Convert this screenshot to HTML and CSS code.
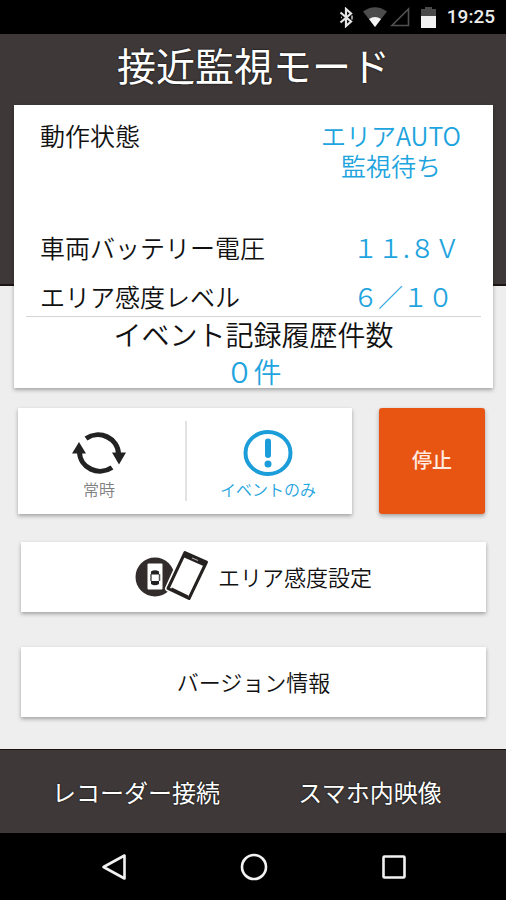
FILE: index.html
```html
<!DOCTYPE html>
<html lang="ja">
<head>
<meta charset="utf-8">
<meta name="viewport" content="width=device-width, initial-scale=1">
<title>接近監視モード</title>
<link rel="stylesheet" href="styles.css">
</head>
<body>
<div class="statusbar">
  <svg width="15" height="21" viewBox="0 0 15 21" aria-hidden="true"><path d="M1.500 5.500L12 14.500L7 19V2L12 6.500L1.500 15.500" fill="none" stroke="#e4e4e4" stroke-width="2.200"/><path d="M13 8.500v4M2 10.500h1" stroke="#bbb" stroke-width="1.600"/></svg>
  <svg class="wifi" width="24" height="20" viewBox="0 0 24 20" aria-hidden="true"><path d="M0 4.500Q12-4 24 4.500L12 20Z" fill="#4c4c4c"/><path d="M6 12Q12 8 18 12L12 20Z" fill="#f4f4f4"/></svg>
  <svg class="signal" width="20" height="20" viewBox="0 0 20 20" aria-hidden="true"><path d="M2 18.500H18.500V2Z" fill="none" stroke="#505050" stroke-width="1.600"/></svg>
  <svg class="battery" width="15" height="21" viewBox="0 0 15 21" aria-hidden="true"><path d="M4 0h7v2h4v7H0V2h4Z" fill="#4a4a4a"/><path d="M0 9h15v12H0Z" fill="#f2f2f2"/></svg>
  <time class="clock">19:25</time>
</div>

<main class="content">
  <section class="hero">
    <h1 class="title">接近監視モード</h1>
    <div class="card">
      <dl class="stats">
        <dt>動作状態</dt>
        <dd class="state">エリアAUTO<br>監視待ち</dd>
        <dt>車両バッテリー電圧</dt>
        <dd>１１.８Ｖ</dd>
        <dt>エリア感度レベル</dt>
        <dd>６／１０</dd>
      </dl>
      <div class="history">
        <h2 class="history-title">イベント記録履歴件数</h2>
        <p class="history-count">０件</p>
      </div>
    </div>
  </section>

  <div class="controls">
    <div class="modes">
      <button class="mode" type="button">
        <svg width="54" height="44" viewBox="0 0 54 44" aria-hidden="true"><g fill="none" stroke="#222" stroke-width="5"><path d="M14 7.500A20.500 19.500 0 0 1 46.500 23"/><path d="M40 36.500A20.500 19.500 0 0 1 7.500 21"/></g><path d="M40 21.500H54L47 33.500Z M0 22.500H14L7 11Z" fill="#222"/></svg>
        常時
      </button>
      <button class="mode mode-active" type="button">
        <svg width="50" height="46" viewBox="0 0 50 46" aria-hidden="true"><ellipse cx="25" cy="23" rx="22.500" ry="21" fill="none" stroke="#1b9dd9" stroke-width="4"/><path d="M25 11.500V25" stroke="#1b9dd9" stroke-width="6" stroke-linecap="round"/><circle cx="25" cy="34" r="3.500" fill="#1b9dd9"/></svg>
        イベントのみ
      </button>
    </div>
    <button class="stop" type="button">停止</button>
  </div>

  <div class="menu">
    <button class="menu-item" type="button">
      <svg width="74" height="52" viewBox="0 0 74 52" aria-hidden="true"><circle cx="20" cy="27" r="19.500" fill="#322d2c"/><rect x="12.500" y="13.500" width="15" height="26" rx="1" fill="#fff"/><path d="M16 21.500q4-2.500 8 0v3h-8ZM16 34q4 2.500 8 0v-3h-8Z" fill="#222"/><path d="M16 24v7M24.500 24v7" stroke="#555" stroke-width="1.500"/><path d="M49.500 2L71.500 11.500L54 49L33 38.500Z" fill="#fff" stroke="#fff" stroke-width="6" stroke-linejoin="round"/><path d="M50 2.500L71.500 12L54 48.500L33 38.500Z" fill="#fff" stroke="#252120" stroke-width="3" stroke-linejoin="round"/><path d="M50 2.500L71.500 12L69.500 16.500L48 7Z" fill="#252120"/><path d="M57 8L63 10.500" stroke="#aaa" stroke-width="1.200"/><path d="M36.500 38.500L53 46.500" stroke="#252120" stroke-width="2"/></svg>
      エリア感度設定
    </button>
    <button class="menu-item" type="button">バージョン情報</button>
  </div>
</main>

<nav class="tabs">
  <a href="#recorder">レコーダー接続</a>
  <a href="#phone">スマホ内映像</a>
</nav>

<div class="sysnav">
  <button type="button" aria-label="戻る"><svg width="28" height="28" viewBox="0 0 28 28" aria-hidden="true"><path d="M3.500 14L24.500 2.500V25.500Z" fill="none" stroke="#f2f2f2" stroke-width="2.600" stroke-linejoin="round"/></svg></button>
  <button type="button" aria-label="ホーム"><svg width="28" height="28" viewBox="0 0 28 28" aria-hidden="true"><circle cx="14" cy="14" r="12" fill="none" stroke="#f2f2f2" stroke-width="2.600"/></svg></button>
  <button type="button" aria-label="履歴"><svg width="28" height="28" viewBox="0 0 28 28" aria-hidden="true"><rect x="3.500" y="3.500" width="21" height="21" rx="1" fill="none" stroke="#f2f2f2" stroke-width="2.600"/></svg></button>
</div>
</body>
</html>
```
FILE: styles.css
```css
:root {
  --dark: #3e3938;
  --page: #eeeeee;
  --blue: #1ea4de;
  --orange: #e85512;
  --shadow: 0 2px 4px rgba(0, 0, 0, 0.32);
}

* {
  box-sizing: border-box;
}

body {
  margin: 0;
  min-height: 100vh;
  display: flex;
  flex-direction: column;
  background: var(--page);
  color: #111;
  font-family: "Noto Sans CJK JP", sans-serif;
  font-weight: 350;
}

h1, h2, p, dl, dd {
  margin: 0;
  font-weight: inherit;
}

button {
  border: 0;
  padding: 0;
  background: none;
  color: inherit;
  font-family: inherit;
  font-weight: inherit;
}

svg {
  display: block;
  flex: none;
}

.statusbar {
  display: flex;
  align-items: center;
  justify-content: flex-end;
  height: 34px;
  padding-right: 11px;
  background: #000;
}

.wifi {
  margin-left: 9px;
}

.signal {
  margin-left: 3px;
}

.battery {
  margin-left: 11px;
}

.clock {
  margin-left: 11px;
  color: #ececec;
  font: 500 19px/36px Roboto, sans-serif;
}

.content {
  flex: 1;
}

.hero {
  padding: 0 13px 0 14px;
  background: linear-gradient(var(--dark) 250px, #1d1514 250px, #1d1514 252px, transparent 252px);
}

.title {
  padding-bottom: 11px;
  color: #fff;
  font-size: 39px;
  font-weight: 400;
  line-height: 60px;
  text-align: center;
  text-shadow: 0 0 2px #000;
}

.card {
  padding: 15px 12px 0;
  background: #fff;
  box-shadow: var(--shadow);
}

.stats {
  display: grid;
  grid-template-columns: 1fr 152px;
  grid-template-rows: 104px 49px 43px;
  padding: 0 14px;
  border-bottom: 1px solid #d4d4d4;
  font-size: 25px;
  line-height: 30px;
}

.stats dd {
  padding-left: 38px;
  color: var(--blue);
  white-space: nowrap;
}

.stats .state {
  padding-left: 0;
  text-align: center;
}

.stats dt:nth-of-type(n+2),
.stats dd:nth-of-type(n+2) {
  padding-top: 8px;
}

.history {
  font-size: 28px;
  text-align: center;
}

.history-title {
  font-size: 28px;
  line-height: 34px;
}

.history-count {
  padding-top: 4px;
  color: var(--blue);
  line-height: 33px;
}

.controls {
  display: flex;
  gap: 27px;
  padding: 20px 21px 0 18px;
}

.modes {
  flex: 1;
  display: flex;
  height: 106px;
  padding: 13px 0;
  background: #fff;
  box-shadow: var(--shadow);
}

.mode {
  flex: 1;
  display: flex;
  flex-direction: column;
  align-items: center;
  justify-content: space-between;
  padding: 10px 5px 3px 0;
  color: #808080;
  font-size: 16px;
  line-height: 18px;
}

.mode-active {
  padding-top: 9px;
  padding-right: 3px;
  border-left: 2px solid #e2e2e2;
  color: var(--blue);
}

.stop {
  width: 106px;
  height: 106px;
  padding-bottom: 4px;
  border-radius: 3px;
  background: var(--orange);
  box-shadow: var(--shadow);
  color: #ffeae0;
  font-size: 20px;
  font-weight: 500;
}

.menu {
  display: grid;
  gap: 35px;
  padding: 28px 20px 31px 21px;
}

.menu-item {
  display: flex;
  align-items: center;
  justify-content: center;
  gap: 9px;
  height: 70px;
  padding-bottom: 2px;
  background: #fff;
  box-shadow: var(--shadow);
  font-size: 22px;
  line-height: 32px;
}

.tabs {
  display: grid;
  grid-template-columns: 1fr 1fr;
  padding: 0 19px;
  border-top: 1px solid #181212;
  background: var(--dark);
}

.tabs a {
  color: #fff;
  font-size: 24px;
  font-weight: 400;
  line-height: 83px;
  text-align: center;
  text-decoration: none;
  text-shadow: 0 0 2px #000;
}

.sysnav {
  display: grid;
  grid-template-columns: repeat(3, 1fr);
  justify-items: center;
  align-items: center;
  height: 67px;
  padding: 0 42px 0 44px;
  background: #000;
}
```
